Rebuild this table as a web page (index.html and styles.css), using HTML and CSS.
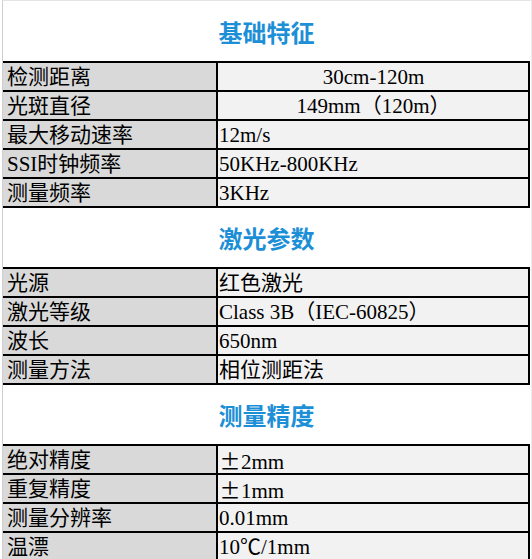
FILE: index.html
```html
<!DOCTYPE html>
<html lang="zh-CN">
<head>
<meta charset="utf-8">
<title>参数</title>
<link rel="stylesheet" href="styles.css">
</head>
<body>
<div class="sheet">
  <div class="title first">基础特征</div>
  <div class="table">
    <div class="row"><div class="label">检测距离</div><div class="value center">30cm-120m</div></div>
    <div class="row"><div class="label">光斑直径</div><div class="value center">149mm（120m）</div></div>
    <div class="row"><div class="label">最大移动速率</div><div class="value">12m/s</div></div>
    <div class="row"><div class="label">SSI时钟频率</div><div class="value">50KHz-800KHz</div></div>
    <div class="row"><div class="label">测量频率</div><div class="value">3KHz</div></div>
  </div>

  <div class="title">激光参数</div>
  <div class="table">
    <div class="row"><div class="label">光源</div><div class="value">红色激光</div></div>
    <div class="row"><div class="label">激光等级</div><div class="value">Class 3B（IEC-60825）</div></div>
    <div class="row"><div class="label">波长</div><div class="value">650nm</div></div>
    <div class="row"><div class="label">测量方法</div><div class="value">相位测距法</div></div>
  </div>

  <div class="title">测量精度</div>
  <div class="table">
    <div class="row"><div class="label">绝对精度</div><div class="value"><span class="fw">±</span>2mm</div></div>
    <div class="row"><div class="label">重复精度</div><div class="value"><span class="fw">±</span>1mm</div></div>
    <div class="row"><div class="label">测量分辨率</div><div class="value">0.01mm</div></div>
    <div class="row"><div class="label">温漂</div><div class="value">10℃/1mm</div></div>
  </div>
</div>
</body>
</html>
```

FILE: styles.css
```css
html, body {
  margin: 0;
  padding: 0;
  background: #ffffff;
}

body {
  width: 532px;
  height: 559px;
  overflow: hidden;
}

.sheet {
  box-sizing: border-box;
  margin-left: 2px;
  width: 530px;
  border-left: 1px solid #cfcfcf;
  border-right: 1px solid #ececec;
  padding-right: 1px;
  border-top: 1px solid #e4e4e4;
}

.title {
  box-sizing: border-box;
  height: 59px;
  padding-top: 0;
  display: flex;
  align-items: center;
  justify-content: center;
  background: #ffffff;
  color: #1d8fd6;
  font-family: "Noto Sans CJK SC", sans-serif;
  font-weight: 700;
  font-size: 24px;
}

.title.first {
  height: 60px;
  padding-top: 1px;
}

.table {
  border-top: 2px solid #000;
  border-right: 2px solid #000;
}

.row {
  display: grid;
  grid-template-columns: 215px 1fr;
  height: 29px;
  box-sizing: border-box;
  border-bottom: 2px solid #000;
  font-family: "Liberation Serif", "Noto Sans CJK SC", serif;
  font-size: 21px;
  color: #000;
  overflow: hidden;
}

.label {
  box-sizing: border-box;
  height: 27px;
  background: #d9d9d9;
  border-right: 2px solid #000;
  padding-left: 4px;
  padding-top: 1px;
  line-height: 27px;
  white-space: nowrap;
}

.value {
  box-sizing: border-box;
  height: 27px;
  background: #f2f2f2;
  padding-left: 1px;
  padding-top: 1px;
  line-height: 27px;
  white-space: nowrap;
}

.value.center {
  text-align: center;
}

.fw {
  display: inline-block;
  width: 22px;
  text-align: center;
  font-family: "Noto Sans CJK SC", sans-serif;
}
```
